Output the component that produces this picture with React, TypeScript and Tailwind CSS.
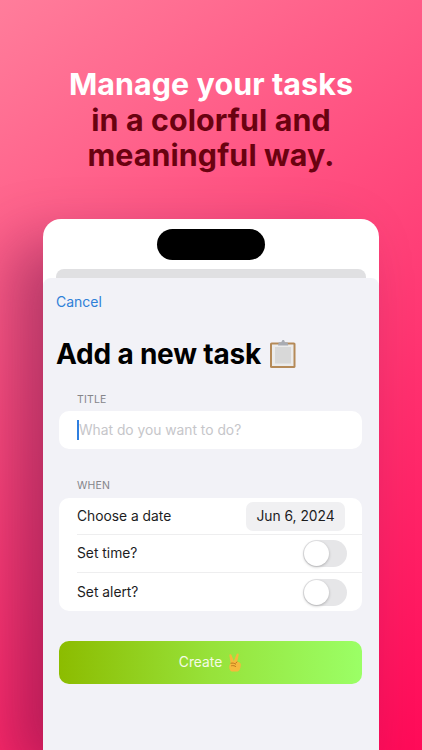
export default function App() {
  const sans = "font-['Inter','Liberation_Sans',sans-serif]";
  return (
    <div className={`${sans} w-[422px] h-[750px] overflow-hidden flex flex-col items-center bg-[linear-gradient(145deg,#ff7d9b_0%,#ff4f80_38%,#ff2f6e_65%,#ff0a58_100%)]`}>
      <h1 className="mt-[67px] h-[107px] w-full text-center text-[30.4px] leading-[35.5px] font-bold tracking-[0.1px]">
        <span className="block text-white">Manage your tasks</span>
        <span className="block text-[#6a0210]">in a colorful and</span>
        <span className="block text-[#6a0210]">meaningful way.</span>
      </h1>
      <div className="mt-[45px] w-[336px] flex-1 rounded-t-[18px] bg-white overflow-hidden flex flex-col shadow-[-30px_24px_60px_rgba(70,10,60,0.4)]">
        <div className="pt-[10px] flex justify-center shrink-0">
          <div className="w-[108px] h-[31px] rounded-full bg-black" />
        </div>
        <div className="mt-[9px] mx-[13px] h-[9px] rounded-t-[8px] bg-[#e0e0e2] shrink-0" />
        <div className="flex-1 bg-[#f2f2f7] rounded-t-[8px] pl-[13px] pr-[17px]">
          <div className="mt-[15px] h-[18px] text-[14px] leading-[18px] text-[#2f80d8]">Cancel</div>
          <div className="mt-[25px] flex items-center gap-[8px] h-[36px]">
            <span className="text-[28px] leading-[36px] font-bold text-black tracking-[-0.2px]">Add a new task</span>
            <svg width="28" height="30" viewBox="0 0 28 30" className="shrink-0">
              <rect x="1" y="3.5" width="25.5" height="25.5" rx="1.6" fill="#b58a58" />
              <rect x="3" y="5.5" width="21.5" height="21.5" fill="#ebebeb" />
              <rect x="6" y="8" width="16" height="16.5" fill="#d8d8d8" />
              <path d="M9 6.5 L9.8 3.2 H12.2 L13.5 1 H15 L16 3.2 H18.6 L19.2 6.5 Z" fill="#a9acb3" />
            </svg>
          </div>
          <div className="mt-[21px] pl-[21px] h-[14px] text-[10.5px] leading-[14px] text-[#85858a] tracking-[0.2px]">TITLE</div>
          <div className="mt-[4px] ml-[3px] h-[38px] rounded-[10px] bg-white flex items-center pl-[18px]">
            <span className="w-[2px] h-[20px] bg-[#2f7fe0] shrink-0" />
            <span className="text-[13.8px] text-[#c6c6ca]">What do you want to do?</span>
          </div>
          <div className="mt-[30px] pl-[21px] h-[14px] text-[10.5px] leading-[14px] text-[#85858a] tracking-[0.2px]">WHEN</div>
          <div className="mt-[5px] ml-[3px] rounded-[10px] bg-white pl-[18px] text-[13.8px] text-[#1c1c1e]">
            <div className="h-[37px] flex items-center justify-between pr-[17px] border-b border-[#eeeeef]">
              <span>Choose a date</span>
              <span className="h-[29px] w-[99px] rounded-[7px] bg-[#f0f0f2] flex items-center justify-center">Jun 6, 2024</span>
            </div>
            <div className="h-[38px] flex items-center justify-between pr-[15px] border-b border-[#eeeeef]">
              <span>Set time?</span>
              <Toggle />
            </div>
            <div className="h-[38px] flex items-center justify-between pr-[15px]">
              <span>Set alert?</span>
              <Toggle />
            </div>
          </div>
          <div className="mt-[30px] ml-[3px] h-[43px] rounded-[10px] bg-[linear-gradient(90deg,#8cbc00_0%,#97e23a_50%,#9bff66_100%)] flex items-center justify-center gap-[6px] text-[13.8px] text-[#f4fbe6]">
            <span>Create</span>
            <svg width="14" height="19" viewBox="0 0 14 19" className="shrink-0">
              <path d="M3.5 18.5 C1.5 17.5 1 15 1.4 12.5 L2.6 10.3 L1.4 2.6 C1.2 1.1 3 .7 3.5 2 L5.8 8.2 L8.7 1.1 C9.2 0 11 .5 10.7 1.9 L9.2 8.6 L11.6 9.5 C12.9 10.2 13.1 12 12.6 13.5 C12.3 16 11.4 17.8 9.6 18.5 Z" fill="#f5b93c" />
              <path d="M2.6 10.3 C4.5 9.8 6.5 10.2 8 11.3 M3.2 12.8 C5 12.3 7 12.8 8 13.8 M9.2 8.6 L7.8 10.2" stroke="#b9701a" strokeWidth=".9" fill="none" />
            </svg>
          </div>
        </div>
      </div>
    </div>
  );
}

function Toggle() {
  return (
    <span className="w-[44px] h-[27px] rounded-full bg-[#e6e6e8] relative shrink-0 block">
      <span className="absolute left-[1px] top-[1px] w-[25px] h-[25px] rounded-full bg-white shadow-[0_1px_3px_rgba(0,0,0,0.25)]" />
    </span>
  );
}
